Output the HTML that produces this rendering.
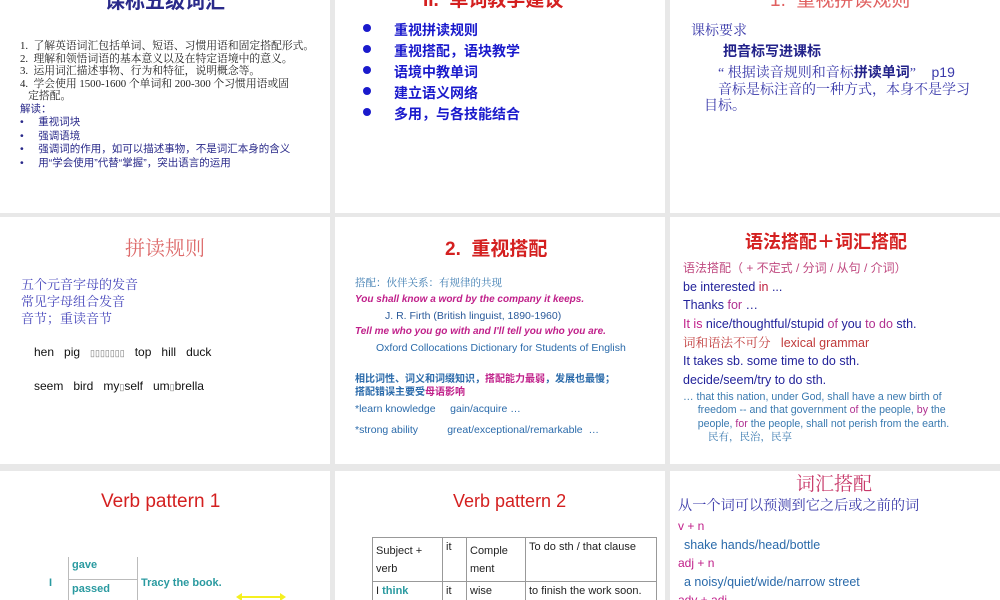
<!DOCTYPE html>
<html><head><meta charset="utf-8"><style>
*{margin:0;padding:0;box-sizing:border-box}
body{width:1000px;height:600px;background:#e8e8e8;position:relative;overflow:hidden;font-family:"Liberation Sans","Noto Sans CJK SC",sans-serif}
.c{position:absolute;background:#fff;overflow:hidden}
.t{position:absolute;white-space:nowrap;line-height:1}
.s{font-family:"Liberation Serif","Noto Serif CJK SC",serif}
.ctr{left:0;right:0;text-align:center}
.dot{position:absolute;width:8px;height:8px;border-radius:50%;background:#1a1acc}
.ln{position:absolute;background:#bbb}
</style></head><body>

<div class="c" style="left:0;top:0;width:330px;height:213px">
 <div class="t ctr" style="top:-8px;font-size:20px;font-weight:bold;color:#2a2a8a;padding-right:0">课标五级词汇</div>
 <div class="t s" style="left:20px;top:40px;font-size:10.8px;color:#222;line-height:12.6px;white-space:normal;width:310px">
 1.&nbsp; 了解英语词汇包括单词、短语、习惯用语和固定搭配形式。<br>2.&nbsp; 理解和领悟词语的基本意义以及在特定语境中的意义。<br>3.&nbsp; 运用词汇描述事物、行为和特征，说明概念等。<br>4.&nbsp; 学会使用 1500-1600 个单词和 200-300 个习惯用语或固<br>&nbsp;&nbsp;&nbsp;定搭配。</div>
 <div class="t" style="left:20px;top:103px;font-size:10.5px;color:#2a2a8a;line-height:13.4px;white-space:normal;width:310px">
 解读：<br>•&nbsp;&nbsp;&nbsp;&nbsp;&nbsp;重视词块<br>•&nbsp;&nbsp;&nbsp;&nbsp;&nbsp;强调语境<br>•&nbsp;&nbsp;&nbsp;&nbsp;&nbsp;强调词的作用，如可以描述事物，不是词汇本身的含义<br>•&nbsp;&nbsp;&nbsp;&nbsp;&nbsp;用“学会使用”代替“掌握”，突出语言的运用</div>
</div>

<div class="c" style="left:335px;top:0;width:330px;height:213px">
 <div class="t" style="left:88px;top:-9px;font-size:19px;font-weight:bold;color:#d42020">II.&nbsp; 单词教学建议</div>
 <div class="dot" style="left:28px;top:24px"></div><div class="dot" style="left:28px;top:45px"></div><div class="dot" style="left:28px;top:66px"></div><div class="dot" style="left:28px;top:87px"></div><div class="dot" style="left:28px;top:108px"></div>
 <div class="t" style="left:59px;top:20px;font-size:14px;font-weight:bold;color:#1a1acc;line-height:21px">重视拼读规则<br>重视搭配，语块教学<br>语境中教单词<br>建立语义网络<br>多用，与各技能结合</div>
</div>

<div class="c" style="left:670px;top:0;width:330px;height:213px">
 <div class="t" style="left:100px;top:-9px;font-size:19px;color:#e06060">1.&nbsp; 重视拼读规则</div>
 <div class="t s" style="left:21px;top:25px;font-size:14px;color:#3a3aaa">课标要求</div>
 <div class="t" style="left:53px;top:44px;font-size:14px;font-weight:bold;color:#22228a">把音标写进课标</div>
 <div class="t" style="left:48px;top:65px;font-size:14px;color:#3a3aaa"><span class="s">“ 根据读音规则和音标</span><b style="color:#22228a">拼读单词</b><span class="s">”</span>&nbsp;&nbsp;&nbsp; p19</div>
 <div class="t s" style="left:48px;top:84px;font-size:14px;color:#3a3aaa">音标是标注音的一种方式，本身不是学习</div>
 <div class="t s" style="left:34px;top:100px;font-size:14px;color:#3a3aaa">目标。</div>
</div>

<div class="c" style="left:0;top:217px;width:330px;height:247px">
 <div class="t s" style="left:125px;top:22px;font-size:20px;color:#dd6a6a">拼读规则</div>
 <div class="t s" style="left:21px;top:59px;font-size:13px;color:#4646bb;line-height:17px">五个元音字母的发音<br>常见字母组合发音<br>音节；重读音节</div>
 <div class="t" style="left:34px;top:129px;font-size:12px;color:#111">hen&nbsp;&nbsp; pig&nbsp;&nbsp; <span style="font-size:9px;color:#777">▯▯▯▯▯▯▯</span>&nbsp;&nbsp; top&nbsp;&nbsp; hill&nbsp;&nbsp; duck</div>
 <div class="t" style="left:34px;top:163px;font-size:12px;color:#111">seem&nbsp;&nbsp; bird&nbsp;&nbsp; my<span style="font-size:9px;color:#777">▯</span>self&nbsp;&nbsp; um<span style="font-size:9px;color:#777">▯</span>brella</div>
</div>

<div class="c" style="left:335px;top:217px;width:330px;height:247px">
 <div class="t" style="left:110px;top:23px;font-size:19px;font-weight:bold;color:#d42020">2.&nbsp; 重视搭配</div>
 <div class="t s" style="left:20px;top:62px;font-size:10.5px;color:#3a7ab0">搭配：伙伴关系：有规律的共现</div>
 <div class="t" style="left:20px;top:78px;font-size:10px;font-weight:bold;font-style:italic;color:#c0208a">You shall know a word by the company it keeps.</div>
 <div class="t" style="left:50px;top:94px;font-size:10.5px;color:#2a5a9a">J. R. Firth (British linguist, 1890-1960)</div>
 <div class="t" style="left:20px;top:110px;font-size:10px;font-weight:bold;font-style:italic;color:#c0208a">Tell me who you go with and I'll tell you who you are.</div>
 <div class="t" style="left:41px;top:126px;font-size:10.5px;color:#2a6aaa">Oxford Collocations Dictionary for Students of English</div>
 <div class="t" style="left:20px;top:157px;font-size:10px;font-weight:bold;color:#2a6aaa;line-height:12.5px">相比词性、词义和词缀知识，<span style="color:#c0208a">搭配能力最弱</span>，发展也最慢；<br>搭配错误主要受<span style="color:#c0208a">母语影响</span></div>
 <div class="t" style="left:20px;top:187px;font-size:10.5px;color:#2a6aaa">*learn knowledge&nbsp;&nbsp;&nbsp;&nbsp; gain/acquire …</div>
 <div class="t" style="left:20px;top:208px;font-size:10.5px;color:#2a6aaa">*strong ability&nbsp;&nbsp;&nbsp;&nbsp;&nbsp;&nbsp;&nbsp;&nbsp;&nbsp; great/exceptional/remarkable&nbsp; …</div>
</div>

<div class="c" style="left:670px;top:217px;width:330px;height:247px">
 <div class="t" style="left:75px;top:16px;font-size:18px;font-weight:bold;color:#d42020">语法搭配＋词汇搭配</div>
 <div class="t" style="left:13px;top:45px;font-size:12px;color:#c04a80">语法搭配（ + 不定式 / 分词 / 从句 / 介词）</div>
 <div class="t" style="left:13px;top:64px;font-size:12.5px;color:#22229a">be interested <span style="color:#c02040">in</span> ...</div>
 <div class="t" style="left:13px;top:82px;font-size:12.5px;color:#22229a">Thanks <span style="color:#b03090">for</span> …</div>
 <div class="t" style="left:13px;top:101px;font-size:12.5px;color:#22229a"><span style="color:#c0208a">It is</span> nice/thoughtful/stupid <span style="color:#b03090">of</span> you <span style="color:#b03090">to do</span> sth.</div>
 <div class="t" style="left:13px;top:120px;font-size:12.5px;color:#c03a3a"><span class="s">词和语法不可分</span>&nbsp;&nbsp; lexical grammar</div>
 <div class="t" style="left:13px;top:138px;font-size:12.5px;color:#22229a">It takes sb. some time to do sth.</div>
 <div class="t" style="left:13px;top:157px;font-size:12.5px;color:#22229a">decide/seem/try to do sth.</div>
 <div class="t" style="left:13px;top:174px;font-size:10.6px;color:#3a7ab0;line-height:13.4px">… that this nation, under God, shall have a new birth of<br>&nbsp;&nbsp;&nbsp;&nbsp;&nbsp;freedom -- and that government <span style="color:#b03090">of</span> the people, <span style="color:#b03090">by</span> the<br>&nbsp;&nbsp;&nbsp;&nbsp;&nbsp;people, <span style="color:#b03090">for</span> the people, shall not perish from the earth.</div>
 <div class="t s" style="left:38px;top:216px;font-size:10.5px;color:#3a7ab0">民有，民治，民享</div>
</div>

<div class="c" style="left:0;top:471px;width:330px;height:129px">
 <div class="t" style="left:101px;top:21px;font-size:19px;color:#d42020">Verb pattern 1</div>
 <div class="ln" style="left:68px;top:86px;width:1px;height:50px"></div>
 <div class="ln" style="left:137px;top:86px;width:1px;height:50px"></div>
 <div class="ln" style="left:68px;top:108px;width:70px;height:1px"></div>
 <div class="t" style="left:72px;top:89px;font-size:11px;font-weight:bold;color:#2a9aa0">gave</div>
 <div class="t" style="left:72px;top:113px;font-size:11px;font-weight:bold;color:#2a9aa0">passed</div>
 <div class="t" style="left:49px;top:107px;font-size:11px;font-weight:bold;color:#2a9aa0">I</div>
 <div class="t" style="left:141px;top:107px;font-size:11px;font-weight:bold;color:#2a9aa0">Tracy the book.</div>
 <svg style="position:absolute;left:236px;top:122px" width="50" height="8"><path d="M4 4H46" stroke="#f5f020" stroke-width="2"/><path d="M0 4L6 0V8Z M50 4L44 0V8Z" fill="#f5f020"/></svg>
</div>

<div class="c" style="left:335px;top:471px;width:330px;height:129px">
 <div class="t" style="left:118px;top:21px;font-size:18px;color:#d42020">Verb pattern 2</div>
 <div style="position:absolute;left:37px;top:66px;width:285px;height:80px;border:1px solid #999"></div>
 <div class="ln" style="left:107px;top:66px;width:1px;height:70px;background:#999"></div>
 <div class="ln" style="left:131px;top:66px;width:1px;height:70px;background:#999"></div>
 <div class="ln" style="left:190px;top:66px;width:1px;height:70px;background:#999"></div>
 <div class="ln" style="left:37px;top:110px;width:285px;height:1px;background:#999"></div>
 <div class="t" style="left:41px;top:71px;font-size:11px;color:#222;line-height:18px">Subject +<br>verb</div>
 <div class="t" style="left:111px;top:71px;font-size:11px;color:#222">it</div>
 <div class="t" style="left:135px;top:71px;font-size:11px;color:#222;line-height:18px">Comple<br>ment</div>
 <div class="t" style="left:194px;top:71px;font-size:11px;color:#222">To do sth / that clause</div>
 <div class="t" style="left:41px;top:115px;font-size:11px;color:#222">I <b style="color:#2a9aa0">think</b></div>
 <div class="t" style="left:111px;top:115px;font-size:11px;color:#222">it</div>
 <div class="t" style="left:135px;top:115px;font-size:11px;color:#222">wise</div>
 <div class="t" style="left:194px;top:115px;font-size:11px;color:#222">to finish the work soon.</div>
</div>

<div class="c" style="left:670px;top:471px;width:330px;height:129px">
 <div class="t s" style="left:126px;top:4px;font-size:19px;color:#c83a6a">词汇搭配</div>
 <div class="t s" style="left:8px;top:28px;font-size:14.2px;color:#3a3aaa">从一个词可以预测到它之后或之前的词</div>
 <div class="t" style="left:8px;top:49px;font-size:12px;color:#c0208a">v + n</div>
 <div class="t" style="left:14px;top:68px;font-size:12.5px;color:#2a6aaa">shake hands/head/bottle</div>
 <div class="t" style="left:8px;top:86px;font-size:12px;color:#c0208a">adj + n</div>
 <div class="t" style="left:14px;top:105px;font-size:12.5px;color:#2a6aaa">a noisy/quiet/wide/narrow street</div>
 <div class="t" style="left:8px;top:123px;font-size:12px;color:#c0208a">adv + adj</div>
</div>
</body></html>
